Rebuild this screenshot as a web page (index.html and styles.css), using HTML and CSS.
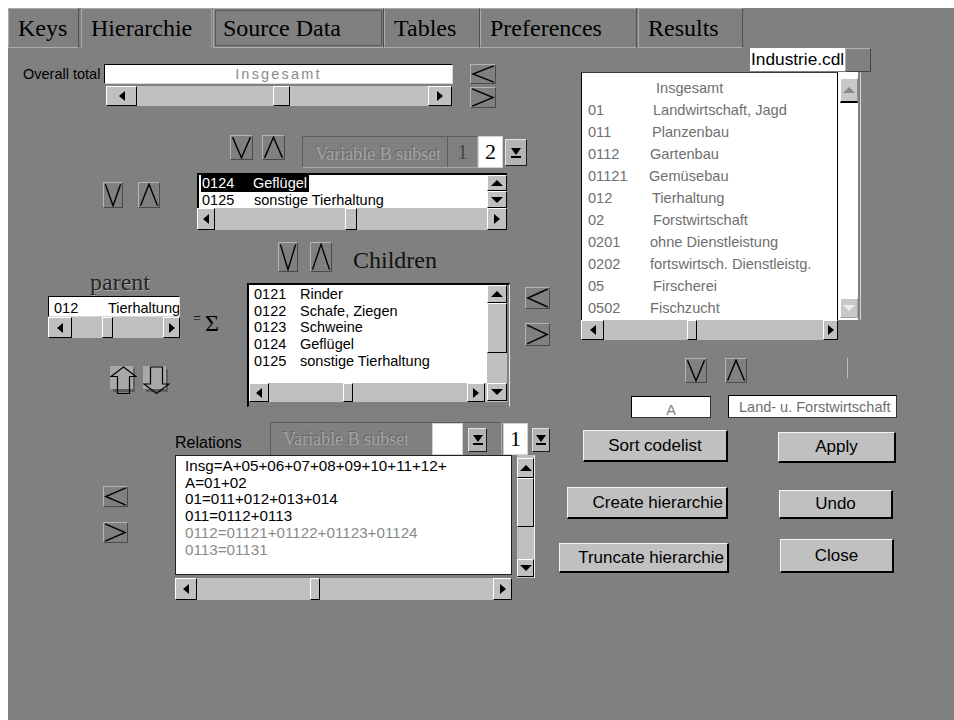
FILE: index.html
```html
<!DOCTYPE html>
<html lang="de">
<head>
<meta charset="utf-8">
<title>Hierarchie</title>
<link rel="stylesheet" href="styles.css">
</head>
<body>
<div class="window">
  <nav class="tabs">
    <div class="tab tab-keys">Keys</div>
    <div class="tab tab-hier active">Hierarchie</div>
    <div class="tab tab-source focus">Source Data</div>
    <div class="tab tab-tables">Tables</div>
    <div class="tab tab-prefs">Preferences</div>
    <div class="tab tab-results">Results</div>
  </nav>

  <div class="panel">
    <!-- left side: total, subset lists, parent/children, relations -->
    <div class="col-left">
      <div class="row row-total">
        <span class="lbl lbl-total">Overall total</span>
        <div class="total-field">
          <div class="entry entry-total">Insgesamt</div>
          <div class="hsb hsb-total">
            <span class="sb-btn"><i class="tri-l"></i></span>
            <span class="sb-track"><span class="sb-thumb"></span></span>
            <span class="sb-btn"><i class="tri-r"></i></span>
          </div>
        </div>
        <div class="lr-pair lr-total">
          <span class="chev"><svg viewBox="0 0 20 20" preserveAspectRatio="none"><polyline points="19,1 1.5,10 19,19"/></svg></span>
          <span class="chev"><svg viewBox="0 0 20 20" preserveAspectRatio="none"><polyline points="1,1 18.5,10 1,19"/></svg></span>
        </div>
      </div>

      <div class="row row-subset">
        <span class="chev"><svg viewBox="0 0 20 20" preserveAspectRatio="none"><polyline points="1.5,1 10,19 18.5,1"/></svg></span>
        <span class="chev"><svg viewBox="0 0 20 20" preserveAspectRatio="none"><polyline points="1.5,19 10,1 18.5,19"/></svg></span>
        <div class="subset subset-top">
          <span class="subset-text">Variable B subset</span>
          <span class="subset-num">1</span>
        </div>
        <span class="numbox numbox-top">2</span>
        <span class="dropbtn dropbtn-top"><i class="tri-d"></i></span>
      </div>

      <div class="row row-list1">
        <span class="chev"><svg viewBox="0 0 20 20" preserveAspectRatio="none"><polyline points="1.5,1 10,19 18.5,1"/></svg></span>
        <span class="chev"><svg viewBox="0 0 20 20" preserveAspectRatio="none"><polyline points="1.5,19 10,1 18.5,19"/></svg></span>
        <div class="list-top">
          <div class="list-top-upper">
            <div class="list-body">
              <div class="item"><span class="hl"><span class="code">0124</span>Geflügel</span></div>
              <div class="item"><span class="code">0125</span>sonstige Tierhaltung</div>
            </div>
            <div class="vsb-mini">
              <span class="sb-btn"><i class="tri-u"></i></span>
              <span class="sb-btn"><i class="tri-d"></i></span>
            </div>
          </div>
          <div class="hsb hsb-top">
            <span class="sb-btn"><i class="tri-l"></i></span>
            <span class="sb-track"><span class="sb-thumb"></span></span>
            <span class="sb-btn"><i class="tri-r"></i></span>
          </div>
        </div>
      </div>

      <div class="row row-children-head">
        <span class="chev"><svg viewBox="0 0 20 20" preserveAspectRatio="none"><polyline points="1.5,1 10,19 18.5,1"/></svg></span>
        <span class="chev"><svg viewBox="0 0 20 20" preserveAspectRatio="none"><polyline points="1.5,19 10,1 18.5,19"/></svg></span>
        <span class="children-title">Children</span>
      </div>

      <div class="row row-main">
        <div class="parent-group">
          <div class="parent-title">parent</div>
          <div class="entry entry-parent"><span class="pcode">012</span>Tierhaltung</div>
          <div class="hsb hsb-parent">
            <span class="sb-btn"><i class="tri-l"></i></span>
            <span class="sb-track"><span class="sb-thumb"></span></span>
            <span class="sb-btn"><i class="tri-r"></i></span>
          </div>
          <div class="updown">
            <span class="arrowbtn">
              <svg width="27" height="29" viewBox="0 0 27 29">
                <path d="M3 3 H25 V26 H3 Z" fill="#5e5e5e"/>
                <rect x="0" y="0" width="23" height="23" fill="#a8a8a8"/>
                <path d="M13.5 1 L26 10.5 L19.5 10.5 L19.5 27.5 L7.5 27.5 L7.5 10.5 L1 10.5 Z" fill="none" stroke="#000" stroke-width="1.2"/>
              </svg>
            </span>
            <span class="arrowbtn">
              <svg width="27" height="29" viewBox="0 0 27 29">
                <path d="M3 3 H25 V26 H3 Z" fill="#5e5e5e"/>
                <rect x="0" y="0" width="23" height="23" fill="#a8a8a8"/>
                <path d="M7.5 1 L19.5 1 L19.5 18 L26 18 L13.5 27.5 L1 18 L7.5 18 Z" fill="none" stroke="#000" stroke-width="1.2"/>
              </svg>
            </span>
          </div>
        </div>

        <div class="sum"><span class="eq">=</span><span class="sigma">Σ</span></div>

        <div class="list-children">
          <div class="child-body">
            <div class="item"><span class="code">0121</span>Rinder</div>
            <div class="item"><span class="code">0122</span>Schafe, Ziegen</div>
            <div class="item"><span class="code">0123</span>Schweine</div>
            <div class="item"><span class="code">0124</span>Geflügel</div>
            <div class="item"><span class="code">0125</span>sonstige Tierhaltung</div>
          </div>
          <div class="vsb vsb-children">
            <span class="sb-btn up"><i class="tri-u"></i></span>
            <span class="sb-thumb"></span>
            <span class="sb-btn down"><i class="tri-d"></i></span>
          </div>
          <div class="hsb hsb-children">
            <span class="sb-btn"><i class="tri-l"></i></span>
            <span class="sb-track"><span class="sb-thumb"></span></span>
            <span class="sb-btn"><i class="tri-r"></i></span>
          </div>
        </div>

        <div class="lr-pair lr-children">
          <span class="chev"><svg viewBox="0 0 20 20" preserveAspectRatio="none"><polyline points="19,1 1.5,10 19,19"/></svg></span>
          <span class="chev"><svg viewBox="0 0 20 20" preserveAspectRatio="none"><polyline points="1,1 18.5,10 1,19"/></svg></span>
        </div>
      </div>

      <div class="row row-relations">
        <div class="lr-pair lr-rel">
          <span class="chev"><svg viewBox="0 0 20 20" preserveAspectRatio="none"><polyline points="19,1 1.5,10 19,19"/></svg></span>
          <span class="chev"><svg viewBox="0 0 20 20" preserveAspectRatio="none"><polyline points="1,1 18.5,10 1,19"/></svg></span>
        </div>
        <div class="relations">
          <div class="rel-head">
            <span class="lbl-rel">Relations</span>
            <div class="subset subset-rel">
              <span class="subset-text">Variable B subset</span>
              <span class="numbox numbox-blank"></span>
              <span class="dropbtn dropbtn-rel"><i class="tri-d"></i></span>
            </div>
            <span class="numbox numbox-one">1</span>
            <span class="dropbtn dropbtn-one"><i class="tri-d"></i></span>
          </div>
          <div class="rel-body">
            <div class="rel-text">
              <div>Insg=A+05+06+07+08+09+10+11+12+</div>
              <div>A=01+02</div>
              <div>01=011+012+013+014</div>
              <div>011=0112+0113</div>
              <div class="dim">0112=01121+01122+01123+01124</div>
              <div class="dim">0113=01131</div>
            </div>
            <div class="vsb vsb-rel">
              <span class="sb-btn up"><i class="tri-u"></i></span>
              <span class="sb-thumb"></span>
              <span class="sb-btn down"><i class="tri-d"></i></span>
            </div>
            <div class="hsb hsb-rel">
              <span class="sb-btn"><i class="tri-l"></i></span>
              <span class="sb-track"><span class="sb-thumb"></span></span>
              <span class="sb-btn"><i class="tri-r"></i></span>
            </div>
          </div>
        </div>
      </div>
    </div>

    <!-- right side: code list file, code list, editor fields and actions -->
    <div class="col-right">
      <div class="file-row">
        <span class="entry entry-file">Industrie.cdl</span>
        <span class="file-btn"></span>
      </div>

      <div class="codelist">
        <div class="code-body">
          <div class="crow"><span class="cc c0"></span><span>Insgesamt</span></div>
          <div class="crow"><span class="cc c2">01</span><span>Landwirtschaft, Jagd</span></div>
          <div class="crow"><span class="cc c3">011</span><span>Planzenbau</span></div>
          <div class="crow"><span class="cc c4">0112</span><span>Gartenbau</span></div>
          <div class="crow"><span class="cc c5">01121</span><span>Gemüsebau</span></div>
          <div class="crow"><span class="cc c3">012</span><span>Tierhaltung</span></div>
          <div class="crow"><span class="cc c2">02</span><span>Forstwirtschaft</span></div>
          <div class="crow"><span class="cc c4">0201</span><span>ohne Dienstleistung</span></div>
          <div class="crow"><span class="cc c4">0202</span><span>fortswirtsch. Dienstleistg.</span></div>
          <div class="crow"><span class="cc c2">05</span><span>Firscherei</span></div>
          <div class="crow"><span class="cc c4">0502</span><span>Fischzucht</span></div>
        </div>
        <div class="code-vsb">
          <span class="sb-btn up"><i class="tri-u"></i></span>
          <span class="sb-btn down"><i class="tri-d"></i></span>
        </div>
        <div class="hsb hsb-code">
          <span class="sb-btn"><i class="tri-l"></i></span>
          <span class="sb-track"><span class="sb-thumb"></span></span>
          <span class="sb-btn"><i class="tri-r"></i></span>
        </div>
      </div>

      <div class="row row-right-va">
        <span class="chev"><svg viewBox="0 0 20 20" preserveAspectRatio="none"><polyline points="1.5,1 10,19 18.5,1"/></svg></span>
        <span class="chev"><svg viewBox="0 0 20 20" preserveAspectRatio="none"><polyline points="1.5,19 10,1 18.5,19"/></svg></span>
        <span class="vline"></span>
      </div>

      <div class="row row-fields">
        <span class="entry entry-code">A</span>
        <span class="entry entry-name">Land- u. Forstwirtschaft</span>
      </div>

      <div class="actions">
        <div class="act-col act-left">
          <span class="pbtn btn-sort">Sort codelist</span>
          <span class="pbtn pbtn-r btn-create">Create hierarchie</span>
          <span class="pbtn pbtn-r btn-trunc">Truncate hierarchie</span>
        </div>
        <div class="act-col act-right">
          <span class="pbtn btn-apply">Apply</span>
          <span class="pbtn btn-undo">Undo</span>
          <span class="pbtn btn-close">Close</span>
        </div>
      </div>
    </div>
  </div>
</div>
</body>
</html>
```

FILE: styles.css
```css
html {
  background: #fff;
  overflow: hidden;
}

body {
  margin: 8px 0 0 8px;
  font-family: "Liberation Sans", Arial, sans-serif;
  font-size: 14.5px;
  color: #000;
}

.window {
  width: 946px;
  height: 712px;
  background: #808080;
  display: flex;
  flex-direction: column;
}

/* ---------- tab strip ---------- */
.tabs {
  display: flex;
  height: 40px;
  flex: none;
}

.tab {
  box-sizing: border-box;
  height: 40px;
  border: 1px solid;
  border-color: #ababab #4f4f4f #ababab #ababab;
  font-family: "Liberation Serif", "Times New Roman", serif;
  font-size: 24px;
  line-height: 39px;
  padding-left: 9px;
  white-space: nowrap;
  color: #000;
}

.tab.active {
  border-bottom-color: #808080;
  border-right-color: #9a9a9a;
}

.tab.focus {
  box-shadow: inset 0 0 0 1px #808080, inset 0 0 0 2px #5a5a5a;
}

.tab-keys { width: 71px; }
.tab-hier { width: 131px; margin-left: 2px; }
.tab-source { width: 171px; margin-left: 1px; }
.tab-tables { width: 96px; }
.tab-prefs { width: 157px; }
.tab-results { width: 105px; margin-left: 1px; }

/* ---------- panel layout ---------- */
.panel {
  display: flex;
  flex: 1;
}

.col-left {
  width: 551px;
  flex: none;
  display: flex;
  flex-direction: column;
}

.col-right {
  width: 395px;
  flex: none;
  display: flex;
  flex-direction: column;
}

.row {
  display: flex;
  align-items: flex-start;
  flex: none;
}

/* ---------- shared widgets ---------- */
.chev {
  box-sizing: border-box;
  display: block;
  flex: none;
  border: 1px solid;
  border-color: #b4b4b4 #4a4a4a #4a4a4a #b4b4b4;
}

.chev svg {
  display: block;
  width: 100%;
  height: 100%;
}

.chev polyline {
  fill: none;
  stroke: #000;
  stroke-width: 1.4;
  vector-effect: non-scaling-stroke;
}

.lr-pair {
  display: flex;
  flex-direction: column;
  flex: none;
}

.entry {
  box-sizing: border-box;
  display: block;
  flex: none;
  background: #fff;
  border: 1px solid;
  border-color: #000 #d8d8d8 #d8d8d8 #000;
  white-space: nowrap;
  overflow: hidden;
}

.hsb {
  display: flex;
  background: #c0c0c0;
  box-sizing: border-box;
  flex: none;
}

.vsb {
  display: flex;
  flex-direction: column;
  background: #c0c0c0;
  box-sizing: border-box;
}

.sb-btn {
  box-sizing: border-box;
  flex: none;
  background: #c0c0c0;
  border: 1px solid;
  border-color: #fff #000 #000 #fff;
  display: flex;
  align-items: center;
  justify-content: center;
}

.sb-track {
  flex: 1;
  display: flex;
  min-width: 0;
}

.sb-thumb {
  box-sizing: border-box;
  flex: none;
  display: block;
  background: #c0c0c0;
  border: 1px solid;
  border-color: #fff #000 #000 #fff;
}

.tri-l, .tri-r, .tri-u, .tri-d {
  display: block;
  width: 0;
  height: 0;
}

.tri-l {
  border-top: 5px solid transparent;
  border-bottom: 5px solid transparent;
  border-right: 6px solid #000;
}

.tri-r {
  border-top: 5px solid transparent;
  border-bottom: 5px solid transparent;
  border-left: 6px solid #000;
}

.tri-u {
  border-left: 6px solid transparent;
  border-right: 6px solid transparent;
  border-bottom: 6px solid #000;
}

.tri-d {
  border-left: 6px solid transparent;
  border-right: 6px solid transparent;
  border-top: 6px solid #000;
}

.subset {
  box-sizing: border-box;
  display: flex;
  flex: none;
  border: 1px solid;
  border-color: #5c5c5c #a6a6a6 #a6a6a6 #5c5c5c;
}

.subset-text {
  box-sizing: border-box;
  flex: none;
  font-family: "Liberation Serif", "Times New Roman", serif;
  font-size: 18px;
  color: #a4a4a4;
  text-shadow: -1px -1px 0 #636363;
  white-space: nowrap;
}

.numbox {
  box-sizing: border-box;
  display: block;
  flex: none;
  background: #fff;
  border: 1px solid #d0d0d0;
  font-family: "Liberation Serif", "Times New Roman", serif;
  font-size: 22px;
  text-align: center;
  line-height: 30px;
}

.dropbtn {
  box-sizing: border-box;
  flex: none;
  background: #b4b4b4;
  border: 1px solid;
  border-color: #e2e2e2 #1c1c1c #1c1c1c #e2e2e2;
  display: flex;
  flex-direction: column;
  align-items: center;
  justify-content: center;
  gap: 1px;
}

.dropbtn .tri-d {
  border-left-width: 5px;
  border-right-width: 5px;
  border-top-width: 7px;
}

.dropbtn::after {
  content: "";
  display: block;
  width: 10px;
  height: 2px;
  background: #000;
}

.item {
  display: flex;
  white-space: nowrap;
  height: 16.67px;
  line-height: 16.67px;
}

/* ---------- overall total ---------- */
.row-total {
  margin-top: 16px;
  padding-left: 15px;
}

.lbl-total {
  width: 81px;
  height: 20px;
  line-height: 20px;
  flex: none;
  white-space: nowrap;
}

.total-field {
  width: 349px;
  flex: none;
}

.entry-total {
  height: 20px;
  line-height: 18px;
  text-align: center;
  color: #8a8a8a;
  letter-spacing: 2.2px;
  font-size: 14.5px;
}

.hsb-total {
  margin: 2px 0 0 2px;
  width: 346px;
  height: 20px;
}

.hsb-total .sb-btn:first-child { width: 31px; }
.hsb-total .sb-btn:last-child { width: 24px; }
.hsb-total .sb-thumb { margin-left: 136px; width: 17px; }

.lr-total {
  margin-left: 17px;
  gap: 3px;
}

.lr-total .chev { width: 26px; height: 20px; }
.lr-total .chev + .chev { height: 21px; }

/* ---------- upper subset selector ---------- */
.row-subset {
  margin-top: 27px;
  padding-left: 222px;
}

.row-subset .chev { width: 23px; height: 25px; }
.row-subset .chev + .chev { margin-left: 9px; }

.subset-top {
  margin: 1px 0 0 17px;
  width: 176px;
  height: 32px;
}

.subset-top .subset-text {
  width: 144px;
  padding: 3px 0 0 12px;
  line-height: 28px;
}

.subset-num {
  flex: 1;
  border-left: 1px solid #5c5c5c;
  font-family: "Liberation Serif", "Times New Roman", serif;
  font-size: 22px;
  color: #484848;
  text-align: center;
  line-height: 30px;
}

.numbox-top {
  width: 25px;
  height: 32px;
  margin-top: 1px;
}

.dropbtn-top {
  margin: 4px 0 0 2px;
  width: 22px;
  height: 27px;
}

/* ---------- selected children list ---------- */
.row-list1 {
  margin-top: 5px;
  padding-left: 95px;
}

.row-list1 .chev { margin-top: 9px; width: 20px; height: 26px; }
.row-list1 .chev + .chev { margin-left: 15px; width: 22px; }

.list-top {
  margin-left: 37px;
  width: 310px;
  height: 57px;
  display: flex;
  flex-direction: column;
  flex: none;
}

.list-top-upper {
  display: flex;
  height: 35px;
}

.list-body {
  box-sizing: border-box;
  width: 290px;
  border-top: 2px solid #000;
  border-left: 2px solid #000;
  background: #fff;
  overflow: hidden;
  padding-left: 2px;
}

.list-body .code { width: 52px; flex: none; }

.hl {
  display: inline-flex;
  background: #000;
  color: #fff;
  padding: 0 2px 0 1px;
}

.list-body .hl .code { width: 51px; }
.list-body .item + .item { padding-left: 1px; }

.vsb-mini {
  width: 20px;
  box-sizing: border-box;
  border-top: 2px solid #000;
  background: #c0c0c0;
  display: flex;
  flex-direction: column;
}

.vsb-mini .sb-btn { height: 16px; }
.vsb-mini .sb-btn + .sb-btn { height: 17px; }

.hsb-top {
  width: 310px;
  height: 22px;
}

.hsb-top .sb-btn:first-child { width: 18px; }
.hsb-top .sb-btn:last-child { width: 20px; }
.hsb-top .sb-thumb { margin-left: 130px; width: 12px; }

/* ---------- children heading ---------- */
.row-children-head {
  margin-top: 12px;
  padding-left: 270px;
}

.row-children-head .chev { width: 20px; height: 30px; }
.row-children-head .chev + .chev { margin-left: 12px; width: 22px; }

.children-title {
  margin-left: 21px;
  height: 30px;
  font-family: "Liberation Serif", "Times New Roman", serif;
  font-size: 24px;
  line-height: 36px;
  color: #111;
  white-space: nowrap;
}

/* ---------- parent and children ---------- */
.row-main {
  padding-left: 40px;
}

.parent-group {
  width: 132px;
  flex: none;
}

.parent-title {
  height: 24px;
  padding-left: 42px;
  font-family: "Liberation Serif", "Times New Roman", serif;
  font-size: 24px;
  line-height: 20px;
  color: #262626;
  text-shadow: 1px 1px 0 #a6a6a6;
}

.entry-parent {
  display: flex;
  height: 21px;
  padding: 2px 0 0 5px;
  line-height: 18px;
}

.pcode {
  width: 54px;
  flex: none;
}

.hsb-parent {
  width: 132px;
  height: 21px;
}

.hsb-parent .sb-btn:first-child { width: 24px; }
.hsb-parent .sb-btn:last-child { width: 17px; }
.hsb-parent .sb-thumb { margin-left: 30px; width: 11px; }

.updown {
  display: flex;
  gap: 6px;
  margin: 28px 0 0 62px;
}

.arrowbtn svg {
  display: block;
}

.sum {
  flex: none;
  width: 30px;
  margin: 36px 0 0 13px;
  font-family: "Liberation Serif", "Times New Roman", serif;
  line-height: 22px;
  white-space: nowrap;
}

.eq {
  font-size: 14px;
  vertical-align: 8px;
  margin-right: 4px;
}

.sigma {
  font-size: 24px;
}

.list-children {
  flex: none;
  box-sizing: border-box;
  margin: 11px 0 0 24px;
  width: 263px;
  height: 124px;
  border-style: solid;
  border-width: 2px 1px 1px 2px;
  border-color: #000 #e6e6e6 #7a7a7a #000;
  padding-bottom: 4px;
  display: grid;
  grid-template-columns: 238px 20px;
  grid-template-rows: 98px 19px;
}

.child-body {
  grid-column: 1;
  grid-row: 1;
  background: #fff;
  padding: 1px 0 0 5px;
  overflow: hidden;
}

.child-body .code { width: 46px; flex: none; }

.vsb-children {
  grid-column: 2;
  grid-row: 1 / span 2;
}

.vsb-children .up { height: 18px; }
.vsb-children .sb-thumb { height: 50px; }
.vsb-children .down { height: 18px; margin-top: auto; margin-bottom: 1px; }

.hsb-children {
  grid-column: 1;
  grid-row: 2;
}

.hsb-children .sb-btn:first-child { width: 20px; }
.hsb-children .sb-btn:last-child { width: 18px; margin-right: 2px; }
.hsb-children .sb-thumb { margin-left: 74px; width: 10px; }

.lr-children {
  margin: 15px 0 0 15px;
  gap: 14px;
}

.lr-children .chev { width: 25px; height: 22px; }
.lr-children .chev + .chev { height: 23px; }

/* ---------- relations ---------- */
.row-relations {
  margin-top: 13px;
  padding-left: 95px;
}

.lr-rel {
  margin-top: 66px;
  gap: 15px;
}

.lr-rel .chev { width: 25px; height: 21px; }

.relations {
  margin-left: 47px;
  width: 375px;
  flex: none;
}

.rel-head {
  display: flex;
  align-items: flex-start;
  height: 35px;
}

.lbl-rel {
  width: 95px;
  flex: none;
  padding-top: 15px;
  font-size: 16px;
  line-height: 16px;
  white-space: nowrap;
}

.subset-rel {
  margin-top: 2px;
  width: 232px;
  height: 33px;
  border-bottom: none;
  align-items: flex-start;
}

.subset-rel .subset-text {
  width: 161px;
  padding: 2px 0 0 12px;
  line-height: 28px;
}

.numbox-blank {
  width: 31px;
  height: 32px;
}

.dropbtn-rel {
  margin: 5px 0 0 5px;
  width: 19px;
  height: 24px;
}

.numbox-one {
  margin: 3px 0 0 1px;
  width: 25px;
  height: 32px;
}

.dropbtn-one {
  margin: 8px 0 0 4px;
  width: 18px;
  height: 24px;
}

.rel-body {
  display: grid;
  grid-template-columns: 337px 5px 18px;
  grid-template-rows: 123px 22px;
}

.rel-text {
  grid-column: 1;
  grid-row: 1;
  box-sizing: border-box;
  height: 120px;
  background: #fff;
  border: 1px solid #222;
  padding: 2px 0 0 9px;
  font-size: 15.2px;
  line-height: 16.7px;
  white-space: nowrap;
  overflow: hidden;
}

.rel-text .dim {
  color: #8a8a8a;
}

.vsb-rel {
  grid-column: 3;
  grid-row: 1;
  border-right: 1px solid #f0f0f0;
}

.vsb-rel .up { height: 20px; margin-top: 3px; }
.vsb-rel .sb-thumb { height: 49px; }
.vsb-rel .down { height: 18px; margin-top: auto; margin-bottom: 1px; }

.hsb-rel {
  grid-column: 1;
  grid-row: 2;
}

.hsb-rel .sb-btn:first-child { width: 22px; }
.hsb-rel .sb-btn:last-child { width: 19px; }
.hsb-rel .sb-thumb { margin-left: 113px; width: 10px; }

/* ---------- right side ---------- */
.file-row {
  display: flex;
  height: 24px;
  padding-left: 191px;
  flex: none;
}

.entry-file {
  width: 95px;
  height: 23px;
  border: none;
  padding-left: 1px;
  font-size: 17.3px;
  line-height: 23px;
}

.file-btn {
  box-sizing: border-box;
  display: block;
  width: 26px;
  height: 24px;
  border: 1px solid;
  border-color: #b2b2b2 #444 #444 #b2b2b2;
}

.codelist {
  flex: none;
  margin-left: 22px;
  width: 280px;
  height: 268px;
  display: grid;
  grid-template-columns: 257px 23px;
  grid-template-rows: 248px 20px;
}

.code-body {
  grid-column: 1;
  grid-row: 1;
  box-sizing: border-box;
  background: #fff;
  border-left: 1px solid #000;
  border-right: 1px solid #000;
  border-top: 1px solid #3a3a3a;
  padding: 4px 0 0 6px;
  overflow: hidden;
  font-size: 14.6px;
  color: #6f6f6f;
}

.crow {
  display: flex;
  height: 22px;
  line-height: 22px;
  white-space: nowrap;
}

.cc { flex: none; }
.c0 { width: 68px; }
.c2 { width: 65px; }
.c3 { width: 64px; }
.c4 { width: 62px; }
.c5 { width: 61px; }

.code-vsb {
  grid-column: 2;
  grid-row: 1;
  box-sizing: border-box;
  width: 20px;
  padding-left: 2px;
  background: #fff;
  display: flex;
  flex-direction: column;
  box-shadow: 2px 0 0 #808080, 3px 0 0 #d4d4d4;
}

.code-vsb .up {
  margin-top: 6px;
  height: 25px;
  background: #c8c8c8;
  border-bottom: 2px solid #000;
  border-right-color: #909090;
}

.code-vsb .up .tri-u { border-bottom-color: #8a8a8a; }

.code-vsb .down {
  margin-top: auto;
  margin-bottom: 2px;
  height: 20px;
  background: #c8c8c8;
  border-color: #fff #a0a0a0 #a0a0a0 #fff;
}

.code-vsb .down .tri-d { border-top-color: #eee; }

.hsb-code {
  grid-column: 1;
  grid-row: 2;
}

.hsb-code .sb-btn:first-child { width: 23px; }
.hsb-code .sb-btn:last-child { width: 15px; }
.hsb-code .sb-thumb { margin-left: 83px; width: 10px; }

.row-right-va {
  margin-top: 18px;
  padding-left: 126px;
}

.row-right-va .chev { width: 22px; height: 25px; }
.row-right-va .chev + .chev { margin-left: 18px; }

.vline {
  display: block;
  margin-left: 100px;
  width: 1px;
  height: 20px;
  background: #bcbcbc;
}

.row-fields {
  margin-top: 13px;
  padding-left: 72px;
}

.entry-code {
  width: 80px;
  height: 22px;
  padding-top: 4px;
  line-height: 18px;
  text-align: center;
  color: #808080;
  border-color: #000 #333 #333 #000;
}

.entry-name {
  margin: -1px 0 0 17px;
  width: 169px;
  height: 23px;
  padding: 2px 0 0 10px;
  line-height: 18px;
  color: #707070;
  border-color: #000 #333 #333 #000;
}

.actions {
  display: flex;
  margin-top: 12px;
  flex: none;
}

.act-col {
  display: flex;
  flex-direction: column;
  flex: none;
}

.act-left {
  width: 170px;
  align-items: flex-end;
}

.act-right {
  margin-left: 49px;
  align-items: flex-start;
}

.pbtn {
  box-sizing: border-box;
  display: flex;
  align-items: center;
  justify-content: center;
  flex: none;
  background: #c0c0c0;
  border-style: solid;
  border-width: 1px 2px 2px 1px;
  border-color: #f4f4f4 #000 #000 #f4f4f4;
  font-size: 17px;
  white-space: nowrap;
}

.pbtn-r {
  justify-content: flex-end;
  padding-right: 3px;
}

.btn-sort { width: 145px; height: 32px; margin-right: 1px; }
.btn-create { width: 161px; height: 32px; margin: 25px 1px 0 0; }
.btn-trunc { width: 170px; height: 30px; margin-top: 24px; }

.btn-apply { width: 118px; height: 31px; margin-top: 2px; }
.btn-undo { width: 114px; height: 29px; margin: 27px 0 0 1px; }
.btn-close { width: 114px; height: 34px; margin: 20px 0 0 2px; }
```
